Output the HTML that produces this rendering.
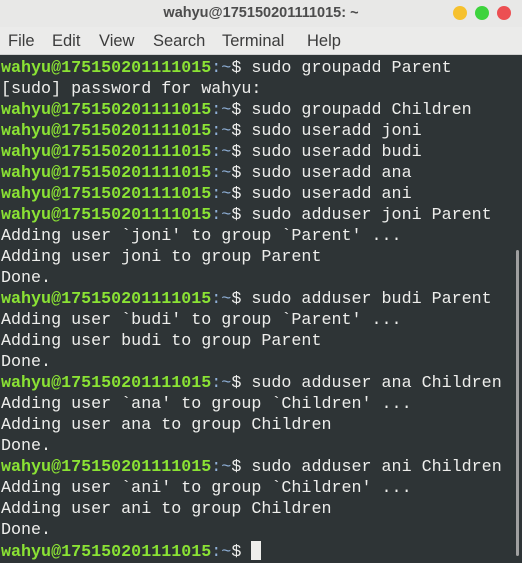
<!DOCTYPE html><html><head><style>
body{margin:0;width:522px;height:561px;overflow:hidden;background:#2e3436;font-family:"Liberation Sans",sans-serif}
#t{position:absolute;top:0;left:0;width:522px;height:27px;background:#e8e8e7;text-align:center;font:bold 14.5px "Liberation Sans",sans-serif;color:#4c4c4c;line-height:26px}
.c{position:absolute;top:6px;width:14px;height:14px;border-radius:50%}
#m{position:absolute;top:27px;left:0;width:522px;height:28px;background:#ebebea;font-size:16.5px;color:#3c3c3c;line-height:28px;border-bottom:1px solid #d0d0d0;box-sizing:border-box}
#m span{position:absolute}
pre{position:absolute;top:58px;left:1px;margin:0;font:16.7px/21px "Liberation Mono",monospace;color:#eeeeec}
b{color:#8ae234}i{font-style:normal;color:#8fb0d8}
#cur{display:inline-block;width:10px;height:19px;background:#eeeeec;vertical-align:-4px}
#sb{position:absolute;left:516px;top:250px;width:3px;height:306px;background:#a0a0a0;border-radius:2px}
</style></head><body>
<div id="t">wahyu@175150201111015: ~
<div class="c" style="left:453px;background:#f6c12e"></div><div class="c" style="left:475px;background:#3dd33d"></div><div class="c" style="left:497px;background:#ec4f52"></div></div>
<div id="m"><span style="left:8px">File</span><span style="left:52px">Edit</span><span style="left:99px">View</span><span style="left:153px">Search</span><span style="left:222px">Terminal</span><span style="left:307px">Help</span></div>
<pre><b>wahyu@175150201111015</b><i>:~</i>$ sudo groupadd Parent
[sudo] password for wahyu: 
<b>wahyu@175150201111015</b><i>:~</i>$ sudo groupadd Children
<b>wahyu@175150201111015</b><i>:~</i>$ sudo useradd joni
<b>wahyu@175150201111015</b><i>:~</i>$ sudo useradd budi
<b>wahyu@175150201111015</b><i>:~</i>$ sudo useradd ana
<b>wahyu@175150201111015</b><i>:~</i>$ sudo useradd ani
<b>wahyu@175150201111015</b><i>:~</i>$ sudo adduser joni Parent
Adding user `joni' to group `Parent' ...
Adding user joni to group Parent
Done.
<b>wahyu@175150201111015</b><i>:~</i>$ sudo adduser budi Parent
Adding user `budi' to group `Parent' ...
Adding user budi to group Parent
Done.
<b>wahyu@175150201111015</b><i>:~</i>$ sudo adduser ana Children
Adding user `ana' to group `Children' ...
Adding user ana to group Children
Done.
<b>wahyu@175150201111015</b><i>:~</i>$ sudo adduser ani Children
Adding user `ani' to group `Children' ...
Adding user ani to group Children
Done.
<b>wahyu@175150201111015</b><i>:~</i>$ <span id="cur"></span></pre>
<div id="sb"></div>
</body></html>
